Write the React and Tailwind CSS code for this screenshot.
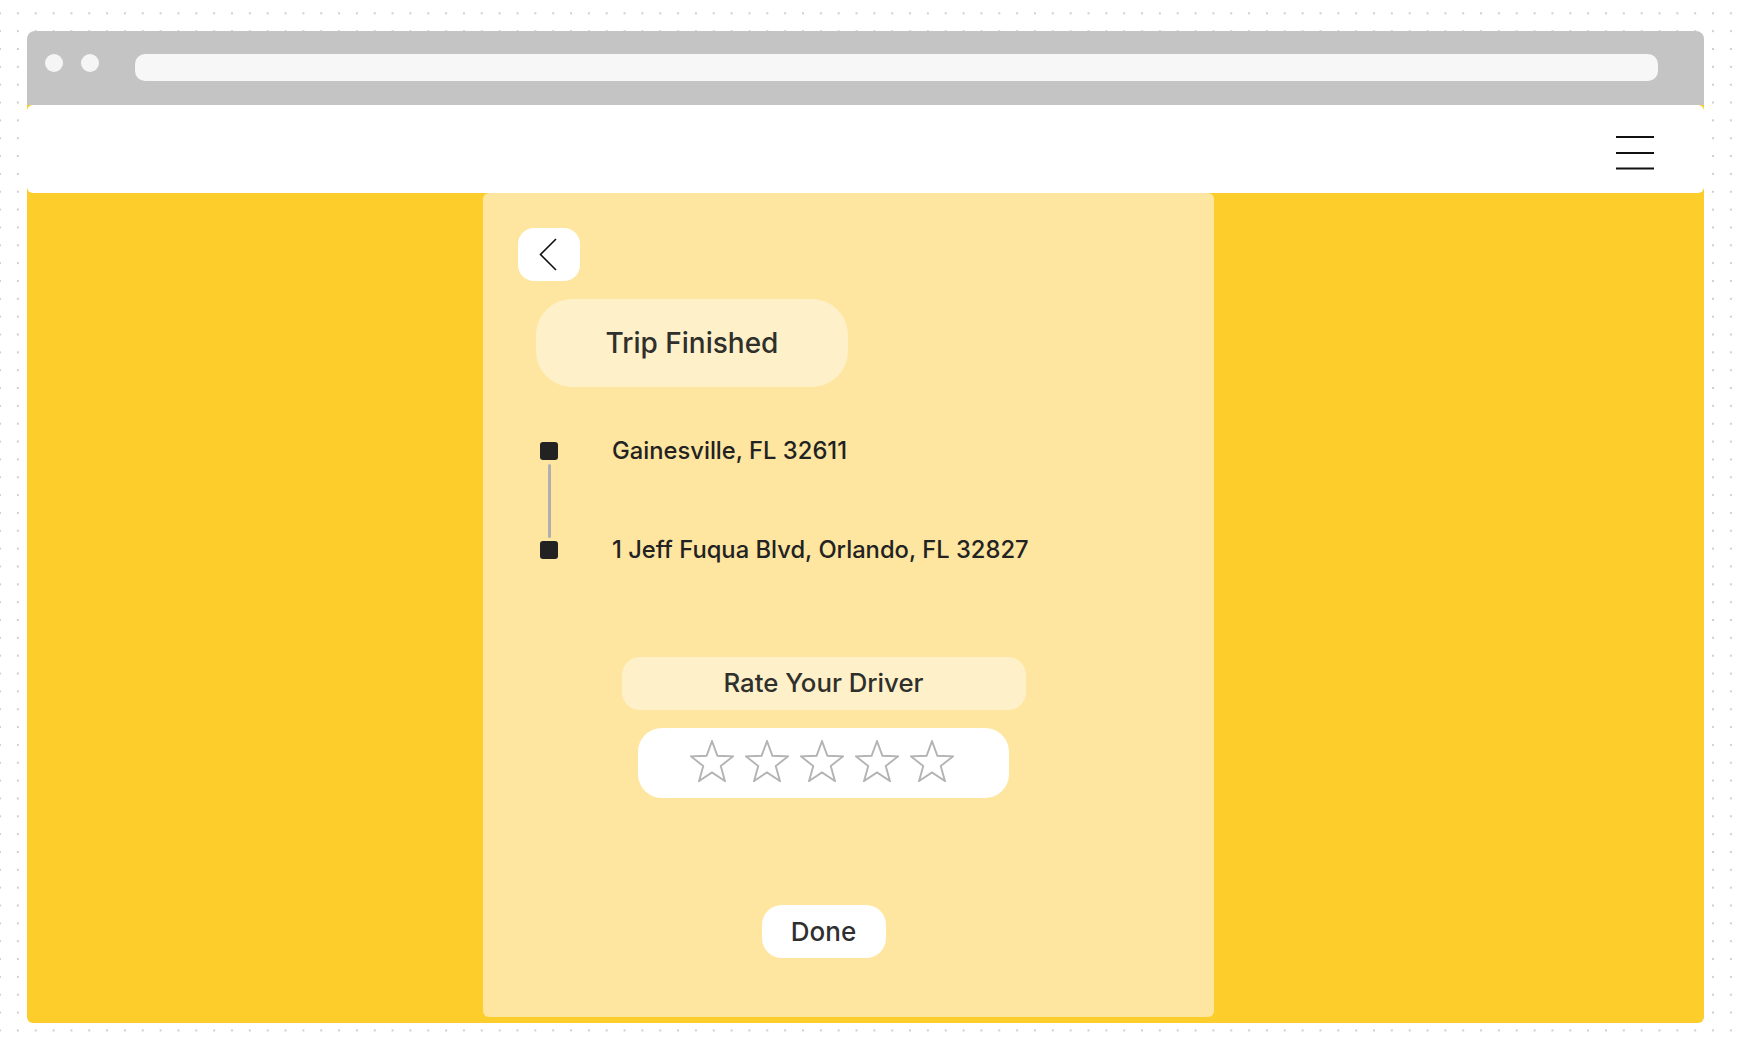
import React from "react";

function starPoints(cx, cy, R, r) {
  const pts = [];
  for (let i = 0; i < 10; i++) {
    const rad = i % 2 === 0 ? R : r;
    const a = (-90 + i * 36) * (Math.PI / 180);
    pts.push(`${(cx + rad * Math.cos(a)).toFixed(2)},${(cy + rad * Math.sin(a)).toFixed(2)}`);
  }
  return pts.join(" ");
}

function Star() {
  return (
    <svg width="44" height="42" viewBox="0 0 44 42" className="block">
      <polygon
        points={starPoints(22, 23.2, 22, 9.2)}
        fill="none"
        stroke="#b3b3b3"
        strokeWidth="1.9"
        strokeLinejoin="miter"
      />
    </svg>
  );
}

export default function App() {
  const font = { fontFamily: "Inter, 'Noto Sans', sans-serif" };
  return (
    <div
      className="w-[1743px] h-[1045px] bg-white pl-[27px] pt-[31px] bg-[radial-gradient(circle,#cfcfcf_0.9px,transparent_1.4px)] bg-[size:17.85px_17.85px] bg-[position:-8.9px_4.4px]"
      style={font}
    >
      <div className="w-[1677px] h-[992px] flex flex-col">
        {/* title bar */}
        <div className="h-[74px] bg-[#c4c4c4] rounded-t-[8px] flex items-start pt-[23px] pl-[18px] pr-[46px]">
          <div className="w-[18px] h-[18px] rounded-full bg-[#f5f5f5]" />
          <div className="w-[18px] h-[18px] rounded-full bg-[#f5f5f5] ml-[17.6px]" />
          <div className="ml-[36px] flex-1 h-[27px] rounded-[10px] bg-[#f7f7f7]" />
        </div>
        {/* yellow page */}
        <div className="flex-1 bg-[#fdcd2c] rounded-b-[6px] flex flex-col">
          <div className="h-[88px] bg-white rounded-[6px] flex justify-end items-start pt-[30.5px] pr-[50px]">
            <svg width="38" height="34" viewBox="0 0 38 34" className="block">
              <line x1="0" y1="1" x2="38" y2="1" stroke="#111" strokeWidth="2" />
              <line x1="0" y1="17" x2="38" y2="17" stroke="#111" strokeWidth="2" />
              <line x1="0" y1="32.5" x2="38" y2="32.5" stroke="#111" strokeWidth="2" />
            </svg>
          </div>
          {/* card */}
          <div className="ml-[456px] w-[731px] h-[824px] rounded-[6px] bg-[#fee6a0] flex flex-col items-start pt-[35px]">
            <button className="ml-[35px] w-[62px] h-[53px] rounded-[16px] bg-white flex items-center justify-center pr-[3px]">
              <svg width="18" height="33" viewBox="0 0 18 33" className="block">
                <polyline points="17,1 1.5,16.5 17,32" fill="none" stroke="#111" strokeWidth="1.6" />
              </svg>
            </button>
            <div className="ml-[53px] mt-[18px] w-[312px] h-[88px] rounded-[36px] bg-[#fef0c8] flex items-center justify-center text-[28px] text-[#2f2f2b] font-medium">
              Trip Finished
            </div>
            {/* route */}
            <div className="ml-[57px] mt-[55px] flex flex-col">
              <div className="flex items-center h-[18px]">
                <div className="w-[18px] h-[18px] rounded-[3px] bg-[#222]" />
                <span className="ml-[54px] text-[23.75px] font-medium text-[#222] whitespace-nowrap">Gainesville, FL 32611</span>
              </div>
              <div className="w-[18px] h-[81px] flex justify-center py-[3.5px]">
                <div className="w-[3px] h-full bg-[#b0b0b0] rounded-full" />
              </div>
              <div className="flex items-center h-[18px]">
                <div className="w-[18px] h-[18px] rounded-[3px] bg-[#222]" />
                <span className="ml-[54px] text-[23.75px] font-medium text-[#222] whitespace-nowrap">1 Jeff Fuqua Blvd, Orlando, FL 32827</span>
              </div>
            </div>
            {/* rating */}
            <div className="w-[681px] flex flex-col items-center mt-[98px]">
              <div className="w-[404px] h-[53px] rounded-[18px] bg-[#fef0c8] flex items-center justify-center text-[25.75px] text-[#2f2f2b] font-medium">
                Rate Your Driver
              </div>
              <div className="mt-[18px] w-[371px] h-[70px] rounded-[24px] bg-white flex items-center justify-center gap-[11px] pr-[4px] pb-[5px]">
                <Star />
                <Star />
                <Star />
                <Star />
                <Star />
              </div>
              <button className="mt-[107px] w-[124px] h-[53px] rounded-[20px] bg-white flex items-center justify-center text-[26px] text-[#2f2f2f] font-medium">
                Done
              </button>
            </div>
          </div>
        </div>
      </div>
    </div>
  );
}
